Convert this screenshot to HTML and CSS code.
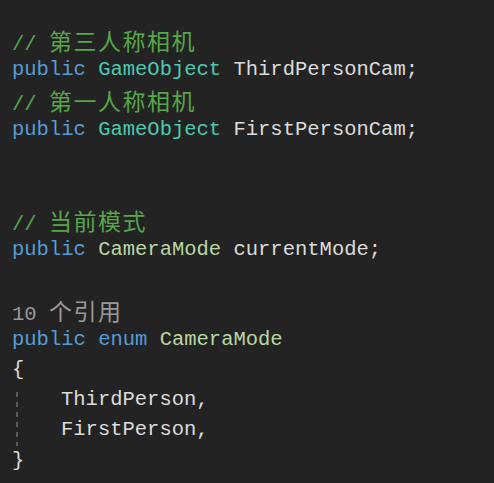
FILE: index.html
```html
<!DOCTYPE html>
<html>
<head>
<meta charset="utf-8">
<link rel="stylesheet" href="styles.css">
</head>
<body>
<div class="code">
  <div class="line"><span class="cm">// <span class="cjk">第三人称相机</span></span></div>
  <div class="line"><span class="kw">public</span> <span class="ty">GameObject</span> <span class="id">ThirdPersonCam;</span></div>
  <div class="line"><span class="cm">// <span class="cjk">第一人称相机</span></span></div>
  <div class="line"><span class="kw">public</span> <span class="ty">GameObject</span> <span class="id">FirstPersonCam;</span></div>
  <div class="line"></div>
  <div class="line"></div>
  <div class="line"><span class="cm">// <span class="cjk">当前模式</span></span></div>
  <div class="line"><span class="kw">public</span> <span class="en">CameraMode</span> <span class="id">currentMode;</span></div>
  <div class="line"></div>
  <div class="line"><span class="lens">10 <span class="cjk">个引用</span></span></div>
  <div class="line"><span class="kw">public</span> <span class="kw">enum</span> <span class="en">CameraMode</span></div>
  <div class="line"><span class="id">{</span></div>
  <div class="block">
    <div class="guide"></div>
    <div class="inner">
      <div class="line indent"><span class="id">ThirdPerson,</span></div>
      <div class="line indent"><span class="id">FirstPerson,</span></div>
    </div>
  </div>
  <div class="line"><span class="id">}</span></div>
</div>
</body>
</html>
```
FILE: styles.css
```css
html, body {
  margin: 0;
  padding: 0;
  background: #232323;
  width: 494px;
  height: 483px;
  overflow: hidden;
}
.code {
  padding: 25px 0 0 12px;
  font-family: "Liberation Mono", "DejaVu Sans Mono", monospace;
  font-size: 20.5px;
  color: #dcdcdc;
}
.line {
  height: 30px;
  line-height: 30px;
  white-space: pre;
}
.cjk {
  font-family: "Noto Sans CJK SC", sans-serif;
  font-size: 23px;
  letter-spacing: 1.5px;
}
.cm { color: #57a64a; }
.kw { color: #569cd6; }
.ty { color: #4ec9b0; }
.en { color: #b8d7a3; }
.id { color: #dcdcdc; }
.lens { color: #999999; }
.block {
  display: flex;
}
.guide {
  width: 2px;
  margin: 7px 0 0 4px;
  height: 54px;
  background: repeating-linear-gradient(to bottom, #5a5a5a 0 5px, transparent 5px 10px);
}
.inner {
  padding-left: 43px;
}
```
